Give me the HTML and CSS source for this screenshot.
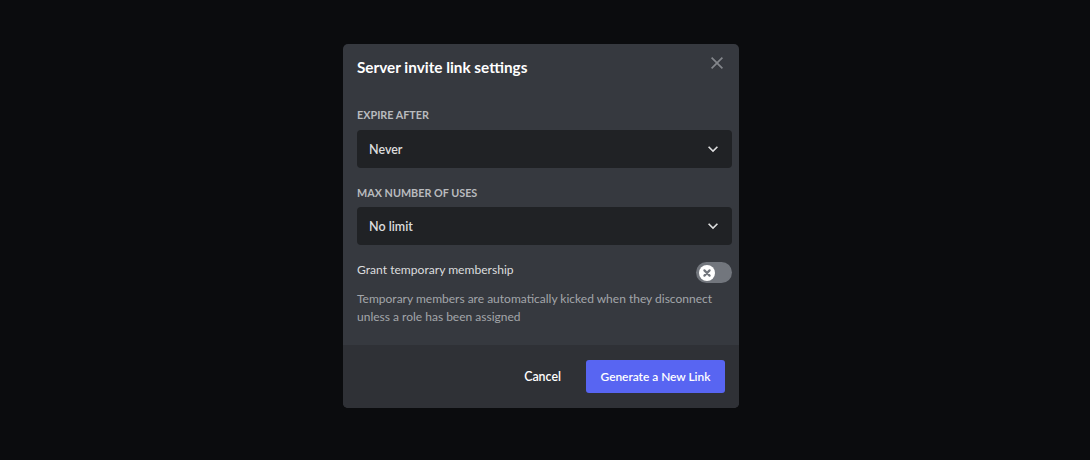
FILE: index.html
```html
<!DOCTYPE html>
<html lang="en">
<head>
<meta charset="utf-8">
<title>Server invite link settings</title>
<link rel="stylesheet" href="styles.css">
</head>
<body>
<div class="backdrop">
  <div class="modal">
    <div class="modal-header">
      <h2 class="modal-title">Server invite link settings</h2>
      <button class="close-btn" aria-label="Close">
        <svg width="18" height="18" viewBox="0 0 24 24"><path fill="currentColor" d="M18.4 4L12 10.4L5.6 4L4 5.6L10.4 12L4 18.4L5.6 20L12 13.6L18.4 20L20 18.4L13.6 12L20 5.6L18.4 4Z"/></svg>
      </button>
    </div>
    <div class="modal-content">
      <div class="field">
        <div class="field-label">Expire After</div>
        <div class="select">
          <span class="select-value">Never</span>
          <svg class="chevron" width="20" height="20" viewBox="0 0 24 24"><path fill="currentColor" d="M16.59 8.59L12 13.17L7.41 8.59L6 10L12 16L18 10L16.59 8.59Z"/></svg>
        </div>
      </div>
      <div class="field">
        <div class="field-label">Max Number of Uses</div>
        <div class="select">
          <span class="select-value">No limit</span>
          <svg class="chevron" width="20" height="20" viewBox="0 0 24 24"><path fill="currentColor" d="M16.59 8.59L12 13.17L7.41 8.59L6 10L12 16L18 10L16.59 8.59Z"/></svg>
        </div>
      </div>
      <div class="switch-row">
        <span class="switch-label">Grant temporary membership</span>
        <div class="toggle">
          <div class="knob">
            <svg width="10" height="10" viewBox="0 0 10 10"><path d="M2.4 2.4L7.6 7.6M7.6 2.4L2.4 7.6" stroke="currentColor" stroke-width="2.2" stroke-linecap="round"/></svg>
          </div>
        </div>
      </div>
      <p class="switch-note">Temporary members are automatically kicked when they disconnect unless a role has been assigned</p>
    </div>
    <div class="modal-footer">
      <button class="btn-link">Cancel</button>
      <button class="btn-primary">Generate a New Link</button>
    </div>
  </div>
</div>
</body>
</html>
```

FILE: styles.css
```css
* { box-sizing: border-box; }
html, body { margin: 0; padding: 0; }
body {
  background: #0b0c0e;
  font-family: Lato, "Noto Sans", sans-serif;
}
.backdrop {
  width: 1090px;
  height: 460px;
  display: flex;
  align-items: center;
  justify-content: center;
  padding: 0 8px 8px 0;
}
.modal {
  width: 396px;
  height: 364px;
  background: #36393f;
  border-radius: 5px;
  overflow: hidden;
  display: flex;
  flex-direction: column;
}
.modal-header {
  display: flex;
  justify-content: space-between;
  align-items: flex-start;
  padding: 10px 13px 0 14px;
}
.modal-title {
  margin: 2px 0 0;
  font-size: 15.3px;
  line-height: 22px;
  font-weight: 700;
  color: #ffffff;
}
.close-btn {
  background: none;
  border: 0;
  padding: 0;
  width: 18px;
  height: 18px;
  color: #83868b;
  display: flex;
}
.modal-content {
  flex: 1;
  padding: 29px 7px 0 14px;
}
.field { margin-bottom: 17px; }
.field-label {
  font-size: 10.8px;
  line-height: 16px;
  font-weight: 700;
  text-transform: uppercase;
  color: #b9bbbe;
  margin-bottom: 7px;
}
.field + .field .field-label { margin-bottom: 6px; }
.select {
  height: 38px;
  background: #202225;
  border-radius: 4px;
  display: flex;
  align-items: center;
  justify-content: space-between;
  padding: 0 9px 0 12px;
}
.select-value {
  font-size: 12.5px;
  color: #dcddde;
  font-weight: 600;
}
.chevron { color: #dcddde; }
.switch-row {
  display: flex;
  justify-content: space-between;
  align-items: flex-start;
}
.switch-label {
  font-size: 12.1px;
  line-height: 20px;
  color: #dcddde;
  margin-top: -2px;
}
.toggle {
  width: 36px;
  height: 21px;
  border-radius: 11px;
  background: #72767d;
  display: flex;
  align-items: center;
  padding-left: 3px;
}
.knob {
  width: 16px;
  height: 16px;
  border-radius: 50%;
  background: #ffffff;
  color: #72767d;
  display: flex;
  align-items: center;
  justify-content: center;
}
.switch-note {
  margin: 7px 0 0;
  font-size: 12px;
  line-height: 18px;
  color: #a3a6aa;
  padding-right: 10px;
}
.modal-footer {
  background: #2f3136;
  height: 63px;
  display: flex;
  justify-content: flex-end;
  align-items: center;
  padding: 0 14px;
}
.btn-link {
  background: none;
  border: 0;
  color: #ffffff;
  font-family: inherit;
  font-size: 12.4px;
  font-weight: 600;
  padding: 0 12px;
  margin-right: 13px;
  height: 33px;
}
.btn-primary {
  background: #5865f2;
  border: 0;
  border-radius: 3px;
  color: #ffffff;
  font-family: inherit;
  font-size: 11.9px;
  font-weight: 600;
  height: 33px;
  width: 139px;
  padding: 0;
}
```
